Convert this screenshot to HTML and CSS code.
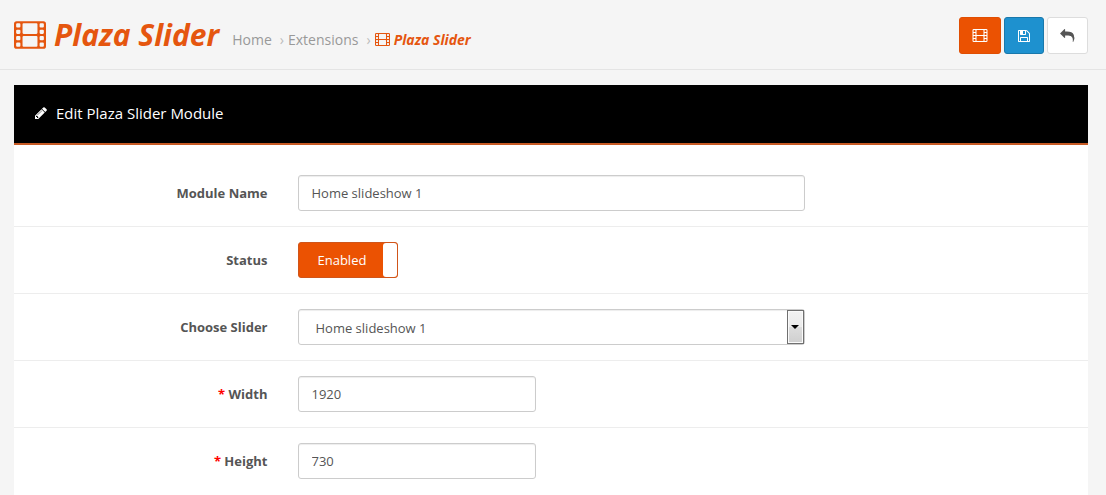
FILE: index.html
```html
<!DOCTYPE html>
<html lang="en">
<head>
  <meta charset="UTF-8">
  <meta name="viewport" content="width=device-width, initial-scale=1.0">
  <title>Plaza Slider</title>
  <link rel="stylesheet" href="styles.css">
</head>
<body>
  <svg class="sprite" aria-hidden="true">
    <symbol id="icon-film" viewBox="0 0 15 13">
      <path fill-rule="evenodd" d="M1.25 0h12.5A1.25 1.25 0 0 1 15 1.25v10.5A1.25 1.25 0 0 1 13.75 13H1.25A1.25 1.25 0 0 1 0 11.75V1.25A1.25 1.25 0 0 1 1.25 0z
        M1.5 1h1q.5 0 .5.5v1q0 .5-.5.5h-1q-.5 0-.5-.5v-1q0-.5.5-.5z
        M1.5 4h1q.5 0 .5.5v1q0 .5-.5.5h-1q-.5 0-.5-.5v-1q0-.5.5-.5z
        M1.5 7h1q.5 0 .5.5v1q0 .5-.5.5h-1q-.5 0-.5-.5v-1q0-.5.5-.5z
        M1.5 10h1q.5 0 .5.5v1q0 .5-.5.5h-1q-.5 0-.5-.5v-1q0-.5.5-.5z
        M12.500 1h1q.5 0 .5.5v1q0 .5-.5.5h-1q-.5 0-.5-.5v-1q0-.5.5-.5z
        M12.500 4h1q.5 0 .5.5v1q0 .5-.5.5h-1q-.5 0-.5-.5v-1q0-.5.5-.5z
        M12.500 7h1q.5 0 .5.5v1q0 .5-.5.5h-1q-.5 0-.5-.5v-1q0-.5.5-.5z
        M12.500 10h1q.5 0 .5.5v1q0 .5-.5.5h-1q-.5 0-.5-.5v-1q0-.5.5-.5z
        M4.500 1h6q.5 0 .5.5v4q0 .5-.5.5h-6q-.5 0-.5-.5v-4q0-.5.5-.5z
        M4.500 7h6q.5 0 .5.5v4q0 .5-.5.5h-6q-.5 0-.5-.5v-4q0-.5.5-.5z"/>
    </symbol>
    <symbol id="icon-save" viewBox="0 0 1792 1792">
      <path d="M512 1536h768v-384h-768v384zm896 0h128v-896q0-14-10-38.500t-20-34.500l-281-281q-10-10-34-20t-39-10v416q0 40-28 68t-68 28h-576q-40 0-68-28t-28-68v-416h-128v1280h128v-416q0-40 28-68t68-28h832q40 0 68 28t28 68v416zm-384-928v-320q0-13-9.500-22.500t-22.500-9.500h-192q-13 0-22.500 9.500t-9.500 22.500v320q0 13 9.500 22.500t22.500 9.500h192q13 0 22.500-9.500t9.500-22.500zm640 32v928q0 40-28 68t-68 28h-1344q-40 0-68-28t-28-68v-1344q0-40 28-68t68-28h928q40 0 88 20t76 48l280 280q28 28 48 76t20 88z"/>
    </symbol>
    <symbol id="icon-reply" viewBox="0 0 1792 1792">
      <path d="M1792 1120q0 166-127 451-3 7-10.500 24t-13.500 30-13 22q-12 17-28 17-15 0-23.500-10t-8.500-25q0-9 2.500-26.500t2.500-23.500q5-68 5-123 0-112-19.500-200.500t-54-153.500-89-112-114.500-81.500-143.500-47.500-162-24-179.500-7h-224v256q0 26-19 45t-45 19-45-19l-512-512q-19-19-19-45t19-45l512-512q19-19 45-19t45 19 19 45v256h224q713 0 875 403 53 134 53 333z"/>
    </symbol>
    <symbol id="icon-pencil" viewBox="0 0 1792 1792">
      <path d="M491 1536l91-91-235-235-91 91v107h128v128h107zm523-928q0-22-22-22-10 0-17 7l-542 542q-7 7-7 17 0 22 22 22 10 0 17-7l542-542q7-7 7-17zm-54-192l416 416-832 832h-416v-416zm683 96q0 53-37 90l-166 166-416-416 166-165q36-38 90-38 53 0 91 38l235 234q37 39 37 91z"/>
    </symbol>
  </svg>

  <header class="page-header">
    <h1 class="page-title"><svg class="film"><use href="#icon-film"/></svg>Plaza Slider</h1>
    <nav class="breadcrumb">
      <a href="#">Home</a>
      <span class="sep">›</span>
      <a href="#">Extensions</a>
      <span class="sep">›</span>
      <a href="#" class="current"><svg class="film"><use href="#icon-film"/></svg>Plaza Slider</a>
    </nav>
    <div class="actions">
      <button type="button" class="btn btn-film" title="Slider"><svg class="film"><use href="#icon-film"/></svg></button>
      <button type="submit" form="form-module" class="btn btn-save" title="Save"><svg><use href="#icon-save"/></svg></button>
      <a href="#" class="btn btn-back" title="Cancel"><svg><use href="#icon-reply"/></svg></a>
    </div>
  </header>

  <main class="panel">
    <h2 class="panel-heading"><svg><use href="#icon-pencil"/></svg>Edit Plaza Slider Module</h2>
    <form class="panel-body" id="form-module">
      <div class="form-group">
        <label class="control-label" for="input-name">Module Name</label>
        <div class="field"><input type="text" class="form-control" id="input-name" value="Home slideshow 1"></div>
      </div>
      <div class="form-group">
        <label class="control-label" for="input-status">Status</label>
        <div class="field">
          <label class="switch"><input type="checkbox" id="input-status" checked><span>Enabled</span></label>
        </div>
      </div>
      <div class="form-group">
        <label class="control-label" for="input-slider">Choose Slider</label>
        <div class="field">
          <div class="select">
            <select class="form-control" id="input-slider">
              <option selected>Home slideshow 1</option>
            </select>
          </div>
        </div>
      </div>
      <div class="form-group required">
        <label class="control-label" for="input-width">Width</label>
        <div class="field field-small"><input type="text" class="form-control" id="input-width" value="1920"></div>
      </div>
      <div class="form-group required">
        <label class="control-label" for="input-height">Height</label>
        <div class="field field-small"><input type="text" class="form-control" id="input-height" value="730"></div>
      </div>
    </form>
  </main>
</body>
</html>
```
FILE: styles.css
```css
*, *::before, *::after {
  box-sizing: border-box;
}
body {
  margin: 0;
  min-height: 100vh;
  display: flex;
  flex-direction: column;
  background: #f5f5f5;
  color: #555;
  font-family: "Open Sans", Arial, sans-serif;
  font-size: 13px;
  line-height: 20px;
}
a {
  text-decoration: none;
}
svg {
  width: 14px;
  height: 14px;
  fill: currentColor;
}
svg.film {
  width: 15px;
  height: 13px;
}
.sprite {
  display: none;
}

/* header */
.page-header {
  display: flex;
  align-items: center;
  height: 70px;
  padding: 0 18px 0 14px;
  border-bottom: 1px solid #e4e4e4;
}
.page-title {
  display: flex;
  align-items: center;
  gap: 8px;
  margin: 0 13px 0 0;
  color: #e5560f;
  font-size: 30px;
  font-style: italic;
  line-height: 40px;
}
.page-title svg.film {
  width: 32px;
  height: 28px;
}
.breadcrumb {
  display: flex;
  align-items: center;
  padding-top: 10px;
  font-size: 14px;
}
.breadcrumb a {
  color: #999;
}
.breadcrumb .sep {
  padding: 0 4px 0 8px;
  color: #bbb;
}
.breadcrumb .current {
  display: flex;
  align-items: center;
  gap: 4px;
  color: #e5560f;
  font-weight: bold;
  font-style: italic;
}
.actions {
  display: flex;
  gap: 3px;
  margin-left: auto;
  padding-top: 2px;
}
.btn {
  display: flex;
  align-items: center;
  justify-content: center;
  height: 37px;
  padding: 0 12px;
  border: 1px solid;
  border-radius: 3px;
  cursor: pointer;
}
.btn svg.film {
  width: 16px;
}
.btn-film {
  background: #eb5202;
  border-color: #e04e02;
  color: #fff;
}
.btn-save {
  background: #1e91cf;
  border-color: #1978ab;
  color: #fff;
}
.btn-back {
  background: #fff;
  border-color: #ddd;
  color: #555;
}
.btn-back svg {
  width: 15px;
}

/* panel */
.panel {
  flex: 1;
  margin: 15px 18px 0 14px;
  background: #fff;
}
.panel-heading {
  display: flex;
  align-items: center;
  gap: 8px;
  height: 60px;
  margin: 0;
  padding: 0 20px 2px;
  background: #000;
  border-bottom: 2px solid #c75a24;
  color: #fff;
  font-size: 15px;
  font-weight: normal;
}
.panel-body {
  padding-top: 15px;
}
.form-group {
  display: flex;
  align-items: center;
  padding: 15px 0;
}
.form-group + .form-group {
  border-top: 1px solid #ededed;
}
.control-label {
  width: 25%;
  padding-right: 15px;
  font-weight: bold;
  text-align: right;
}
.required .control-label::before {
  content: "* ";
  color: #f00;
}
.field {
  width: 50%;
  padding: 0 15px;
}
.field-small {
  width: 25%;
}
.form-control {
  display: block;
  width: 100%;
  height: 36px;
  padding: 8px 13px;
  background: #fff;
  border: 1px solid #ccc;
  border-radius: 3px;
  box-shadow: inset 0 1px 1px rgba(0, 0, 0, 0.075);
  color: #555;
  font: inherit;
}

/* dropdown with its own arrow box */
.select {
  position: relative;
}
.select .form-control {
  appearance: none;
  padding-left: 17px;
}
.select::before {
  content: "";
  position: absolute;
  top: 1px;
  right: 1px;
  bottom: 1px;
  width: 17px;
  border: 1px solid #707070;
  background: linear-gradient(#f2f2f2, #ebebeb 50%, #dddddd 50%, #cfcfcf);
  box-shadow: inset 0 0 0 1px #fafafa;
  pointer-events: none;
}
.select::after {
  content: "";
  position: absolute;
  top: 16px;
  right: 6px;
  border: 4px solid transparent;
  border-top-color: #000;
  border-bottom: 0;
  pointer-events: none;
}

/* on/off switch */
.switch {
  display: flex;
  align-items: center;
  position: relative;
  width: 100px;
  height: 36px;
  padding-left: 19px;
  background: #eb5202;
  border: 1px solid #d0551a;
  border-radius: 3px;
  color: #fff;
  cursor: pointer;
}
.switch input {
  appearance: none;
  position: absolute;
  top: 0;
  right: 0;
  width: 14px;
  height: 34px;
  margin: 0;
  background: #fff;
  border-radius: 3px;
}
```
